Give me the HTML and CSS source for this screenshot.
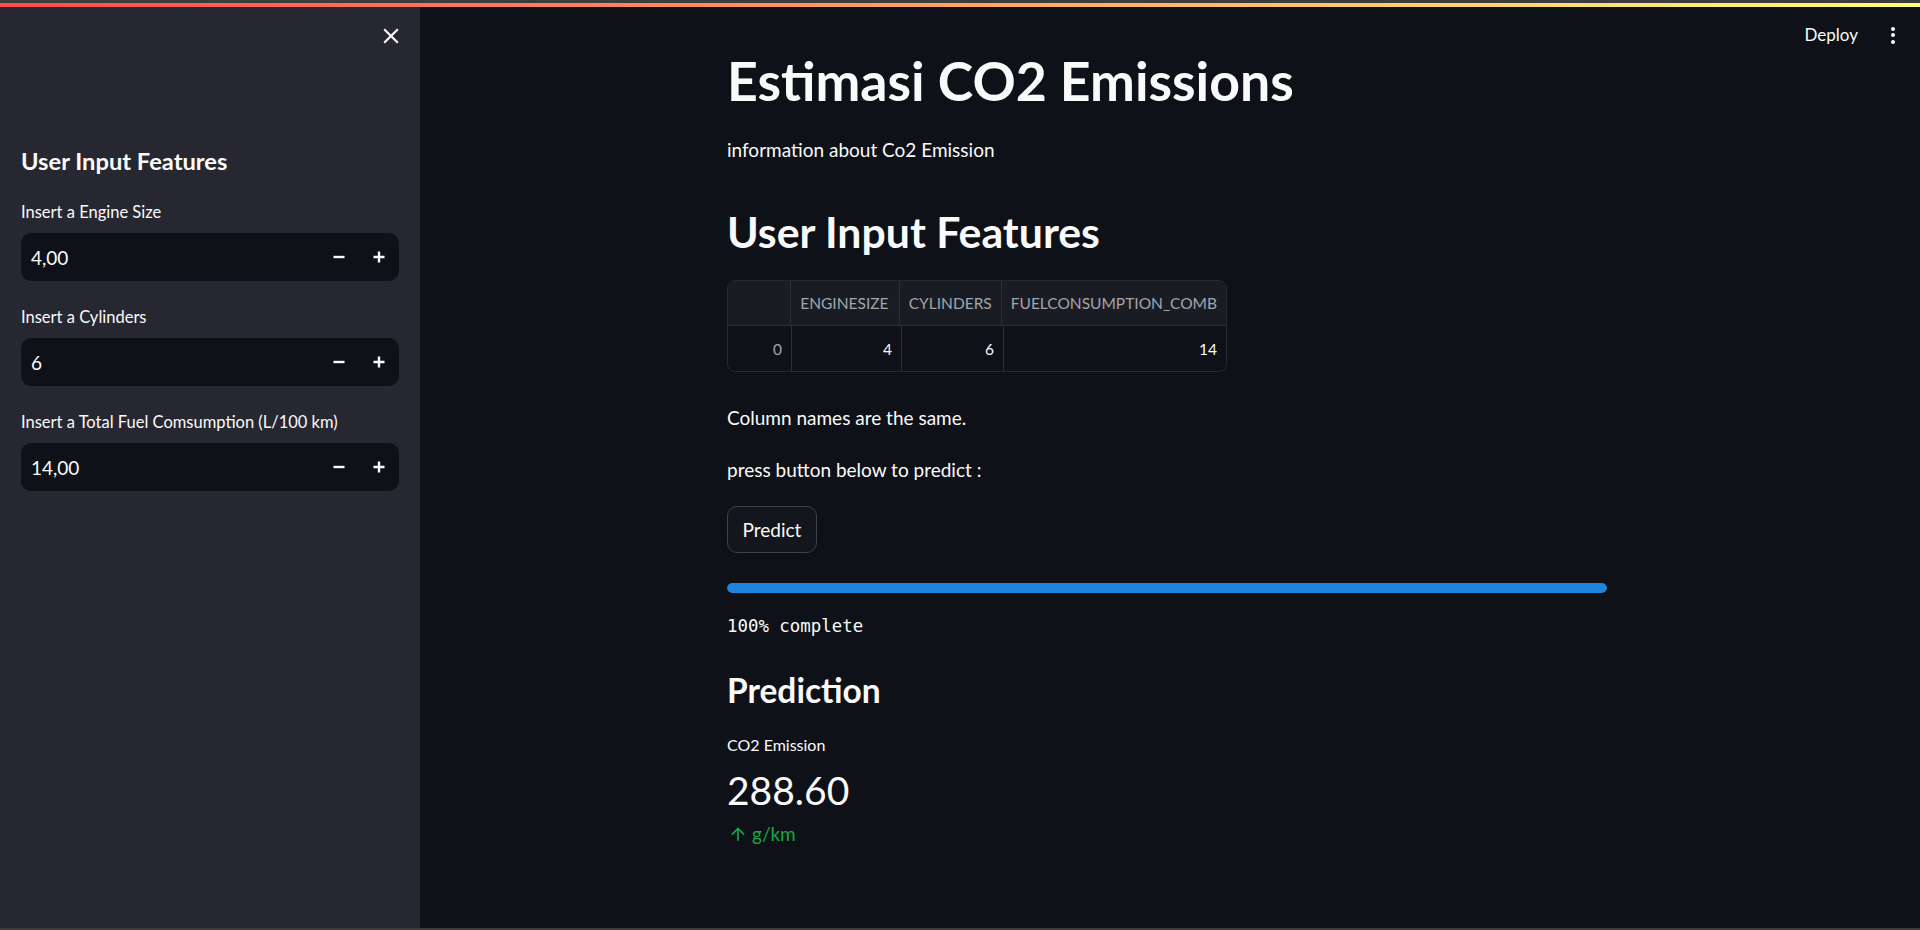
FILE: index.html
```html
<!DOCTYPE html>
<html lang="en">
<head>
<meta charset="utf-8">
<title>Estimasi CO2 Emissions</title>
<link rel="stylesheet" href="styles.css">
</head>
<body>
<div class="frame">
  <div class="decoration"></div>
  <div class="layout">
    <aside class="sidebar">
      <div class="side-top">
        <button class="close-btn" aria-label="Close sidebar">
          <svg width="26" height="26" viewBox="0 0 24 24"><path fill="#fafafa" d="M19 6.41L17.59 5 12 10.59 6.41 5 5 6.41 10.59 12 5 17.59 6.41 19 12 13.41 17.59 19 19 17.59 13.41 12z"/></svg>
        </button>
      </div>
      <h2 class="side-title">User Input Features</h2>

      <div class="field">
        <label class="field-label">Insert a Engine Size</label>
        <div class="num-input">
          <span class="num-value">4,00</span>
          <span class="step"><svg width="12" height="12" viewBox="0 0 12 12"><path d="M0.5 6H11.5" stroke="#fafafa" stroke-width="2.4"/></svg></span>
          <span class="step"><svg width="12" height="12" viewBox="0 0 12 12"><path d="M0.5 6H11.5M6 0.5V11.5" stroke="#fafafa" stroke-width="2.4"/></svg></span>
        </div>
      </div>

      <div class="field">
        <label class="field-label">Insert a Cylinders</label>
        <div class="num-input">
          <span class="num-value">6</span>
          <span class="step"><svg width="12" height="12" viewBox="0 0 12 12"><path d="M0.5 6H11.5" stroke="#fafafa" stroke-width="2.4"/></svg></span>
          <span class="step"><svg width="12" height="12" viewBox="0 0 12 12"><path d="M0.5 6H11.5M6 0.5V11.5" stroke="#fafafa" stroke-width="2.4"/></svg></span>
        </div>
      </div>

      <div class="field">
        <label class="field-label">Insert a Total Fuel Comsumption (L/100 km)</label>
        <div class="num-input">
          <span class="num-value">14,00</span>
          <span class="step"><svg width="12" height="12" viewBox="0 0 12 12"><path d="M0.5 6H11.5" stroke="#fafafa" stroke-width="2.4"/></svg></span>
          <span class="step"><svg width="12" height="12" viewBox="0 0 12 12"><path d="M0.5 6H11.5M6 0.5V11.5" stroke="#fafafa" stroke-width="2.4"/></svg></span>
        </div>
      </div>
    </aside>

    <main class="main">
      <div class="toolbar">
        <span class="deploy">Deploy</span>
        <span class="menu-dots"><i></i><i></i><i></i></span>
      </div>
      <div class="content">
        <h1 class="title">Estimasi CO2 Emissions</h1>
        <p class="text info">information about Co2 Emission</p>
        <h2 class="section">User Input Features</h2>

        <div class="table">
          <div class="row head">
            <div class="cell c0"></div>
            <div class="cell c1">ENGINESIZE</div>
            <div class="cell c2">CYLINDERS</div>
            <div class="cell c3">FUELCONSUMPTION_COMB</div>
          </div>
          <div class="row body">
            <div class="cell c0 idx">0</div>
            <div class="cell c1">4</div>
            <div class="cell c2">6</div>
            <div class="cell c3">14</div>
          </div>
        </div>

        <p class="text same">Column names are the same.</p>
        <p class="text press">press button below to predict :</p>
        <button class="predict">Predict</button>
        <div class="progress"><div class="progress-fill" style="width:100%"></div></div>
        <p class="mono">100% complete</p>

        <h3 class="sub">Prediction</h3>
        <div class="metric">
          <div class="metric-label">CO2 Emission</div>
          <div class="metric-value">288.60</div>
          <div class="metric-delta">
            <svg width="20" height="20" viewBox="0 0 24 24"><path fill="currentColor" d="M4 12l1.41 1.41L11 7.83V20h2V7.83l5.58 5.59L20 12l-8-8-8 8z"/></svg>
            <span>g/km</span>
          </div>
        </div>
      </div>
    </main>
  </div>
</div>
</body>
</html>
```

FILE: styles.css
```css
* { box-sizing: border-box; }

html, body {
  margin: 0;
  padding: 0;
  background: #3c3c3c;
}

body {
  font-family: Lato, "Noto Sans", sans-serif;
  color: #fafafa;
}

.frame {
  height: 930px;
  border-top: 3px solid #3c3c3c;
  border-bottom: 2px solid #3c3c3c;
  display: flex;
  flex-direction: column;
  background: #0e1117;
}

.decoration {
  height: 4px;
  flex: none;
  background: linear-gradient(90deg, #ff4b4b, #fffd80);
}

.layout {
  flex: 1;
  display: flex;
  min-height: 0;
}

/* ---------- Sidebar ---------- */
.sidebar {
  width: 420px;
  flex: none;
  background: #262730;
  padding: 0 21px;
}

.side-top {
  display: flex;
  justify-content: flex-end;
  padding-top: 16px;
  margin-right: -5px;
}

.close-btn {
  background: none;
  border: 0;
  padding: 0;
  width: 26px;
  height: 26px;
  display: flex;
}

.side-title {
  margin: 97px 0 0;
  font-size: 23.7px;
  font-weight: 700;
  line-height: 30px;
}

.field { margin-top: 24px; }
.field + .field { margin-top: 24px; }

.field-label {
  display: block;
  font-size: 16.5px;
  line-height: 24px;
  margin-bottom: 9px;
}

.num-input {
  height: 48px;
  border-radius: 10px;
  background: #0e1117;
  display: flex;
  align-items: center;
  padding-left: 10px;
}

.num-value {
  flex: 1;
  font-size: 19px;
}

.step {
  width: 40px;
  height: 48px;
  display: flex;
  align-items: center;
  justify-content: center;
}

/* ---------- Main ---------- */
.main {
  flex: 1;
  position: relative;
  padding-right: 6px;
}

.toolbar {
  position: absolute;
  top: 17px;
  right: 25px;
  display: flex;
  align-items: center;
  gap: 33px;
}

.deploy {
  font-size: 17px;
  line-height: 22px;
}

.menu-dots {
  display: flex;
  flex-direction: column;
  gap: 2.5px;
}

.menu-dots i {
  width: 4px;
  height: 4px;
  border-radius: 50%;
  background: #fafafa;
}

.content {
  width: 880px;
  margin: 0 auto;
  padding-top: 40px;
}

.title {
  margin: 0;
  font-size: 53.6px;
  font-weight: 700;
  line-height: 66px;
}

.text {
  margin: 0;
  font-size: 19px;
  line-height: 30px;
}

.info { margin-top: 22px; }

.section {
  margin: 40px 0 0;
  font-size: 42.8px;
  font-weight: 700;
  line-height: 54px;
}

.table {
  margin-top: 21px;
  width: 500px;
  border: 1px solid #262932;
  border-radius: 8px;
  overflow: hidden;
}

.row {
  display: flex;
  height: 45px;
}

.row.head {
  background: #1a1c24;
  border-bottom: 1px solid #2b2e37;
  color: #a3a5ab;
  height: 45px;
}

.cell {
  display: flex;
  align-items: center;
  justify-content: flex-end;
  padding: 0 9px;
  font-size: 15.5px;
  border-right: 1px solid #2b2e37;
}

.row.head .cell { justify-content: flex-start; }
.cell:last-child { border-right: 0; }

.c0 { width: 64px; }
.c1 { width: 110px; }
.c2 { width: 102px; }
.c3 { flex: 1; }
.idx { color: #a3a5ab; }

.same { margin-top: 31px; }
.press { margin-top: 22px; }

.predict {
  display: block;
  margin-top: 21px;
  height: 47px;
  width: 90px;
  border: 1px solid #3f424c;
  border-radius: 10px;
  background: #13161d;
  color: #fafafa;
  font-family: inherit;
  font-size: 19px;
  padding: 0;
}

.progress {
  margin-top: 30px;
  height: 10px;
  border-radius: 5px;
  background: #262730;
  overflow: hidden;
}

.progress-fill {
  height: 100%;
  background: #1f84de;
  border-radius: 5px;
}

.mono {
  margin: 18px 0 0;
  font-family: "DejaVu Sans Mono", "Liberation Mono", monospace;
  font-size: 17.4px;
  line-height: 30px;
}

.sub {
  margin: 28px 0 0;
  font-size: 33.5px;
  font-weight: 700;
  line-height: 42px;
}

.metric { margin-top: 23px; }

.metric-label {
  font-size: 16px;
  line-height: 22px;
}

.metric-value {
  font-size: 39px;
  line-height: 54px;
  margin-top: 7px;
}

.metric-delta {
  display: flex;
  align-items: center;
  gap: 4px;
  color: #17a743;
  font-size: 19px;
  line-height: 26px;
  margin-top: 4px;
  margin-left: 1px;
}
```
